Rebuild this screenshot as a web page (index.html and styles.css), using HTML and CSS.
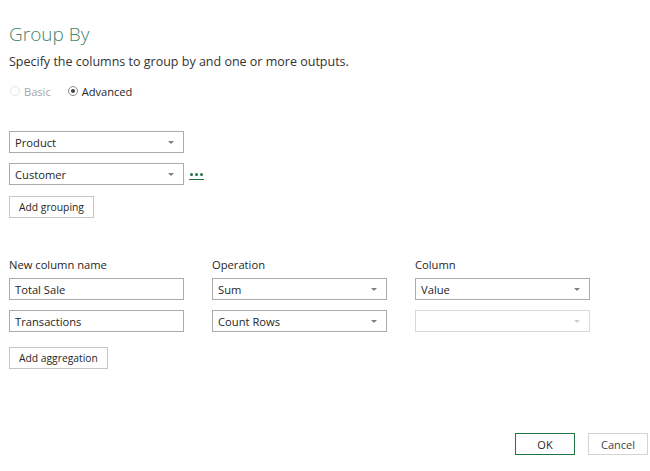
FILE: index.html
```html
<!DOCTYPE html>
<html>
<head>
<meta charset="utf-8">
<link rel="stylesheet" href="styles.css">
</head>
<body>
<div class="dialog">
  <h1 class="title">Group By</h1>
  <p class="subtitle">Specify the columns to group by and one or more outputs.</p>
  <div class="radios">
    <label class="radio disabled"><span class="dot"></span>Basic</label>
    <label class="radio"><span class="dot checked"></span>Advanced</label>
  </div>

  <div class="grouping">
    <div class="row">
      <div class="select w175"><span>Product</span><span class="caret"></span></div>
    </div>
    <div class="row">
      <div class="select w175"><span>Customer</span><span class="caret"></span></div>
      <span class="more"><i></i><i></i><i></i></span>
    </div>
    <button class="btn add-group">Add grouping</button>
  </div>

  <div class="agg">
    <div class="agg-grid">
      <div class="label">New column name</div>
      <div class="label">Operation</div>
      <div class="label">Column</div>

      <div class="input w175">Total Sale</div>
      <div class="select w175"><span>Sum</span><span class="caret"></span></div>
      <div class="select w175"><span>Value</span><span class="caret"></span></div>

      <div class="input w175">Transactions</div>
      <div class="select w175"><span>Count Rows</span><span class="caret"></span></div>
      <div class="select w175 dis"><span></span><span class="caret"></span></div>
    </div>
    <button class="btn">Add aggregation</button>
  </div>

  <div class="footer">
    <button class="btn ok">OK</button>
    <button class="btn cancel">Cancel</button>
  </div>
</div>
</body>
</html>
```
FILE: styles.css
```css
* { box-sizing: border-box; }
html, body { margin: 0; padding: 0; background: #fff; }
body {
  font-family: "Open Sans", "Noto Sans", sans-serif;
  font-size: 11.2px;
  color: #262626;
  width: 650px;
  height: 471px;
  overflow: hidden;
}
.dialog {
  padding: 21px 0 0 9px;
  height: 471px;
  display: flex;
  flex-direction: column;
}
.title {
  margin: 0;
  font-weight: 300;
  font-size: 19px;
  line-height: 26px;
  color: #44836a;
}
.subtitle {
  margin: 6px 0 0 0;
  font-size: 12.5px;
  line-height: 18px;
  color: #333;
}
.radios {
  display: flex;
  gap: 17px;
  margin-top: 12px;
  height: 16px;
  align-items: center;
  padding-left: 1px;
}
.radio {
  display: flex;
  align-items: center;
  gap: 4px;
  font-size: 11.1px;
  color: #262626;
}
.radio.disabled { color: #a6a6a6; }
.dot {
  width: 10px; height: 10px;
  border: 1px solid #8a8a8a;
  border-radius: 50%;
  position: relative;
  background: #fff;
}
.radio.disabled .dot { border-color: #e6e6e6; }
.dot.checked::after {
  content: "";
  position: absolute;
  left: 2px; top: 2px;
  width: 4px; height: 4px;
  border-radius: 50%;
  background: #444;
}
.grouping {
  margin-top: 32px;
  display: flex;
  flex-direction: column;
  gap: 10px;
}
.row { display: flex; align-items: center; gap: 5px; }
.w175 { width: 175px; }
.select, .input {
  height: 22px;
  border: 1px solid #ababab;
  display: flex;
  align-items: center;
  justify-content: space-between;
  padding: 0 9px 0 5px;
  font-size: 11.2px;
  color: #262626;
  background: #fff;
}
.select.dis { border-color: #d9d9d9; }
.caret {
  width: 0; height: 0;
  border-left: 3px solid transparent;
  border-right: 3px solid transparent;
  border-top: 3px solid #808080;
}
.select.dis .caret { border-top-color: #d0d0d0; }
.more {
  display: flex;
  gap: 2px;
  padding: 0 1px 3px;
  border-bottom: 1px solid #217346;
  margin-top: 5px;
}
.more i {
  width: 3px; height: 3px;
  background: #217346;
  border-radius: 50%;
  display: block;
}
.btn {
  font-family: inherit;
  font-size: 10.3px;
  color: #262626;
  background: #fff;
  border: 1px solid #c6c6c6;
  height: 22px;
  padding: 0 9px;
  align-self: flex-start;
  cursor: default;
}
.add-group { margin-top: 1px; }
.agg {
  margin-top: 39px;
  display: flex;
  flex-direction: column;
  gap: 15px;
}
.agg-grid {
  display: grid;
  grid-template-columns: 175px 175px 175px;
  column-gap: 28px;
  row-gap: 10px;
}
.label {
  font-size: 11.2px;
  color: #262626;
  margin-bottom: -4px;
}
.footer {
  margin-top: auto;
  margin-bottom: 16px;
  display: flex;
  justify-content: flex-end;
  gap: 13px;
  padding-right: 2px;
}
.footer .btn { width: 60px; padding: 0; text-align: center; font-size: 11px; }
.btn.ok { border-color: #217346; }
.btn.cancel { border-color: #d4d4d4; color: #444; }
```
